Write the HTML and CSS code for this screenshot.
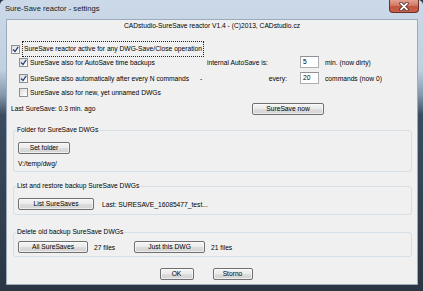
FILE: index.html
```html
<!DOCTYPE html>
<html lang="en">
<head>
    <meta charset="UTF-8">
    <title>Sure-Save reactor - settings</title>
    <link rel="stylesheet" href="styles.css">
</head>
<body>

<div class="window">
    <div class="titlebar">
        <span class="title">Sure-Save reactor - settings</span>
        <span class="close">
            <svg width="10" height="9" viewBox="0 0 10 9">
                <path d="M2 1.5 L8 7.5 M8 1.5 L2 7.5" stroke="#3a1a14" stroke-width="3.2" stroke-linecap="round"/>
                <path d="M2 1.5 L8 7.5 M8 1.5 L2 7.5" stroke="#fff" stroke-width="1.8" stroke-linecap="round"/>
            </svg>
        </span>
    </div>

    <div class="client">
        <div class="caption">CADstudio-SureSave reactor V1.4 - (C)2013, CADstudio.cz</div>

        <div class="row row-main">
            <span class="chk on"><svg width="7" height="7" viewBox="0 0 7 7"><path d="M1 3.5 L3 5.5 L6.2 0.8" fill="none" stroke="#2a3f7a" stroke-width="1.3"/></svg></span>
            <span class="focus">SureSave reactor active for any DWG-Save/Close operation</span>
        </div>

        <div class="row row-sub r2">
            <span class="opt"><span class="chk on"><svg width="7" height="7" viewBox="0 0 7 7"><path d="M1 3.5 L3 5.5 L6.2 0.8" fill="none" stroke="#2a3f7a" stroke-width="1.3"/></svg></span>SureSave also for AutoSave time backups</span>
            <span class="lbl">internal AutoSave is:</span>
            <span class="edit">5</span>
            <span class="unit">min. (now dirty)</span>
        </div>

        <div class="row row-sub r3">
            <span class="opt"><span class="chk on"><svg width="7" height="7" viewBox="0 0 7 7"><path d="M1 3.5 L3 5.5 L6.2 0.8" fill="none" stroke="#2a3f7a" stroke-width="1.3"/></svg></span>SureSave also automatically after every N commands<span class="dash">-</span></span>
            <span class="lbl right">every:</span>
            <span class="edit">20</span>
            <span class="unit">commands (now 0)</span>
        </div>

        <div class="row row-sub r4">
            <span class="opt"><span class="chk"></span>SureSave also for new, yet unnamed DWGs</span>
        </div>

        <div class="row last">
            <span class="last-text">Last SureSave: 0.3 min. ago</span>
            <button class="btn now">SureSave now</button>
        </div>

        <fieldset class="group g1">
            <legend>Folder for SureSave DWGs</legend>
            <button class="btn w52">Set folder</button>
            <div class="path">V:/temp/dwg/</div>
        </fieldset>

        <fieldset class="group g2">
            <legend>List and restore backup SureSave DWGs</legend>
            <div class="line">
                <button class="btn w76">List SureSaves</button>
                <span class="note">Last: SURESAVE_16085477_test...</span>
            </div>
        </fieldset>

        <fieldset class="group g3">
            <legend>Delete old backup SureSave DWGs</legend>
            <div class="line">
                <button class="btn w70">All SureSaves</button>
                <span class="count">27 files</span>
                <button class="btn w71">Just this DWG</button>
                <span class="count">21 files</span>
            </div>
        </fieldset>

        <div class="footer">
            <button class="btn w34">OK</button>
            <button class="btn w40">Storno</button>
        </div>
    </div>
</div>

</body>
</html>
```

FILE: styles.css
```css
body {
    margin: 0;
    background: #2a3644;
    font-family: 'Liberation Sans', Arial, sans-serif;
    font-size: 6.7px;
    color: #000;
}
.window {
    width: 423px;
    height: 291px;
    box-sizing: border-box;
    padding: 0 5px 6px 6px;
    display: flex;
    flex-direction: column;
    border-radius: 5px 5px 0 0;
    background: linear-gradient(to bottom, #cbd9e8 0, #c1d0e0 70px, #8497ab 95px, #3b4c60 115px, #2a3644 291px);
}
.titlebar {
    height: 19px;
    margin: 0 -5px 0 -6px;
    padding: 0 4px 0 5px;
    display: flex;
    align-items: flex-start;
    justify-content: space-between;
}
.title {
    font-size: 7.6px;
    line-height: 18px;
    color: #1a1a1a;
}
.close {
    width: 30px;
    height: 13px;
    box-sizing: border-box;
    border: 1px solid #6b3028;
    border-top: none;
    border-radius: 0 0 4px 4px;
    background: linear-gradient(to bottom, #e2a192 0, #d27a66 45%, #c4553f 55%, #c9604a 100%);
    display: flex;
    align-items: center;
    justify-content: center;
}
.client {
    flex: 1;
    background: #f0f0f0;
    border: 1px solid #9aabbd;
    box-sizing: border-box;
}
.caption {
    height: 12px;
    line-height: 12px;
    text-align: center;
}
.row {
    display: flex;
    align-items: center;
    white-space: nowrap;
}
.row-main {
    height: 14px;
    margin-top: 10px;
    padding-left: 4px;
}
.row-sub {
    height: 12px;
    padding-left: 12px;
}
.r3 {
    margin-top: 4px;
}
.r4 {
    margin-top: 2px;
}
.chk {
    width: 9px;
    height: 9px;
    box-sizing: border-box;
    border: 1px solid #8e8f8f;
    background: linear-gradient(135deg, #dadada 0, #f6f6f6 70%, #fff 100%);
    display: inline-flex;
    align-items: center;
    justify-content: center;
    margin-right: 2px;
    flex: none;
}
.focus {
    padding: 2px 1px;
    line-height: 10px;
    border: 1px dotted #222;
}
.opt {
    width: 188px;
    display: flex;
    align-items: center;
}
.dash {
    margin-left: 11px;
}
.lbl {
    width: 87px;
}
.lbl.right {
    text-align: right;
    padding-right: 7px;
    box-sizing: border-box;
}
.edit {
    width: 19px;
    height: 12px;
    box-sizing: border-box;
    margin-left: 6px;
    padding-left: 2px;
    line-height: 10px;
    background: #fff;
    border: 1px solid #abadb3;
    border-top-color: #8e9094;
}
.unit {
    margin-left: 6px;
}
.last {
    height: 13px;
    margin-top: 4px;
    padding-left: 4px;
}
.last-text {
    width: 241px;
}
.btn {
    height: 12px;
    box-sizing: border-box;
    padding: 0;
    font-family: inherit;
    font-size: 6.7px;
    line-height: 10px;
    color: #000;
    border: 1px solid #707070;
    border-radius: 2px;
    background: linear-gradient(to bottom, #f4f4f4 0, #ebebeb 48%, #dddddd 52%, #d2d2d2 100%);
    box-shadow: inset 0 0 0 1px rgba(255, 255, 255, 0.6);
}
.now { width: 72px; }
.w52 { width: 52px; }
.w76 { width: 76px; }
.w70 { width: 70px; }
.w71 { width: 71px; }
.w34 { width: 34px; }
.w40 { width: 40px; }
.group {
    margin: 10px 5px 0 6px;
    padding: 0 4px 0 4px;
    border: 1px solid #d5dfe5;
    border-radius: 3px;
    min-width: 0;
}
.group legend {
    padding: 0 1px;
    margin-left: -2px;
    line-height: 10px;
}
.g1 {
    padding-top: 7px;
    padding-bottom: 2px;
}
.path {
    margin-top: 5px;
    line-height: 10px;
}
.g2 {
    margin-top: 9px;
    padding-top: 7px;
    padding-bottom: 4px;
}
.g3 {
    margin-top: 12px;
    padding-top: 4px;
    padding-bottom: 3px;
}
.line {
    display: flex;
    align-items: center;
    white-space: nowrap;
}
.note {
    margin-left: 8px;
}
.count {
    margin-left: 6px;
    width: 40px;
}
.footer {
    margin-top: 11px;
    display: flex;
    justify-content: center;
    gap: 19px;
    padding-right: 12px;
}
```
